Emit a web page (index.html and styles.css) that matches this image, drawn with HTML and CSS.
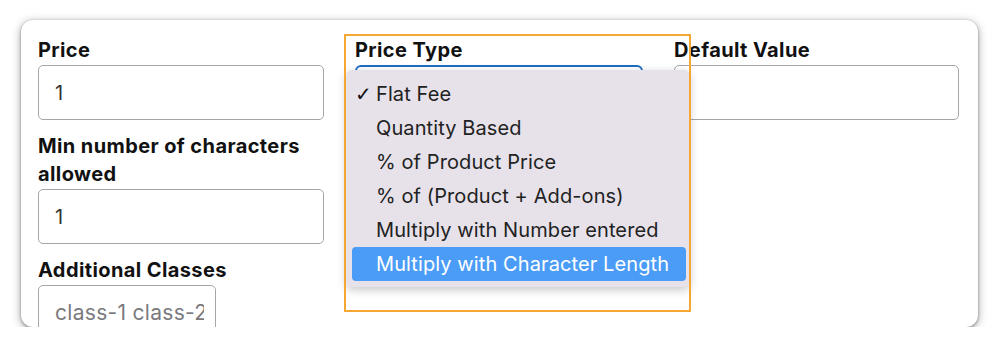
FILE: index.html
```html
<!DOCTYPE html>
<html lang="en">
<head>
    <meta charset="UTF-8">
    <meta name="viewport" content="width=device-width, initial-scale=1.0">
    <title>Price Settings</title>
    <link rel="stylesheet" href="styles.css">
</head>
<body>
    <div class="card">
        <div class="form-grid">
            <div class="col">
                <div class="field">
                    <label>Price</label>
                    <input class="input" type="text" value="1">
                </div>
                <div class="field">
                    <label>Min number of characters allowed</label>
                    <input class="input" type="text" value="1">
                </div>
                <div class="field">
                    <label>Additional Classes</label>
                    <input class="input input-small" type="text" placeholder="class-1 class-2">
                </div>
            </div>

            <div class="col col-type">
                <div class="field">
                    <label>Price Type</label>
                    <div class="select-box"></div>
                </div>
                <div class="dropdown">
                    <div class="option checked">Flat Fee</div>
                    <div class="option">Quantity Based</div>
                    <div class="option">% of Product Price</div>
                    <div class="option">% of (Product + Add-ons)</div>
                    <div class="option">Multiply with Number entered</div>
                    <div class="option active">Multiply with Character Length</div>
                </div>
                <div class="frame"></div>
            </div>

            <div class="col">
                <div class="field">
                    <label>Default Value</label>
                    <input class="input" type="text" value="">
                </div>
            </div>
        </div>
    </div>
</body>
</html>
```

FILE: styles.css
```css
body {
    margin: 0;
    padding: 0;
    background: #ffffff;
    font-family: Inter, "Liberation Sans", Arial, sans-serif;
    color: #111;
}

.card {
    margin: 20px 22px 0 21px;
    height: 307px;
    padding: 16px 19px 0 17px;
    box-sizing: border-box;
    background: white;
    border-radius: 12px;
    box-shadow: 0 1px 3px rgba(0, 0, 0, 0.35), 0 2px 10px rgba(0, 0, 0, 0.35);
    overflow: hidden;
}

.form-grid {
    display: grid;
    grid-template-columns: 286px 288px 285px;
    column-gap: 31px;
}

.col {
    display: flex;
    flex-direction: column;
    gap: 12px;
}

.col-type {
    position: relative;
}

.field label {
    display: block;
    font-size: 20px;
    font-weight: 700;
    line-height: 28px;
    margin-bottom: 1px;
    letter-spacing: 0.4px;
}

.input {
    display: block;
    box-sizing: border-box;
    width: 100%;
    height: 55px;
    margin: 0;
    padding: 0 16px;
    border: 1px solid #a6a6aa;
    border-radius: 5px;
    font-family: inherit;
    font-size: 20px;
    letter-spacing: 0.3px;
    color: #333;
    background: white;
    outline: none;
}

.input::placeholder {
    color: #7a7a7e;
}

.input-small {
    width: 178px;
    padding-right: 11px;
    font-size: 21px;
}

.select-box {
    height: 55px;
    box-sizing: border-box;
    border: 2px solid #1f6dc2;
    border-radius: 6px;
}

.dropdown {
    position: absolute;
    left: -9px;
    top: 34px;
    width: 344px;
    box-sizing: border-box;
    padding: 7px 4px 6px 6px;
    background: #e7e2ea;
    border-radius: 6px;
    box-shadow: 0 3px 10px rgba(0, 0, 0, 0.22);
}

.option {
    height: 34px;
    line-height: 34px;
    padding-left: 24px;
    font-size: 20px;
    letter-spacing: 0.1px;
    color: #222;
    border-radius: 4px;
    position: relative;
    white-space: nowrap;
}

.option.checked::before {
    content: "\2713";
    position: absolute;
    left: 3px;
    font-size: 20px;
    font-family: "DejaVu Sans", sans-serif;
    color: #111;
}

.option.active {
    background: #4b9cf6;
    color: white;
}

.frame {
    position: absolute;
    left: -11px;
    top: -2px;
    width: 347px;
    height: 278px;
    box-sizing: border-box;
    border: 2px solid #f5a733;
    pointer-events: none;
}
```
